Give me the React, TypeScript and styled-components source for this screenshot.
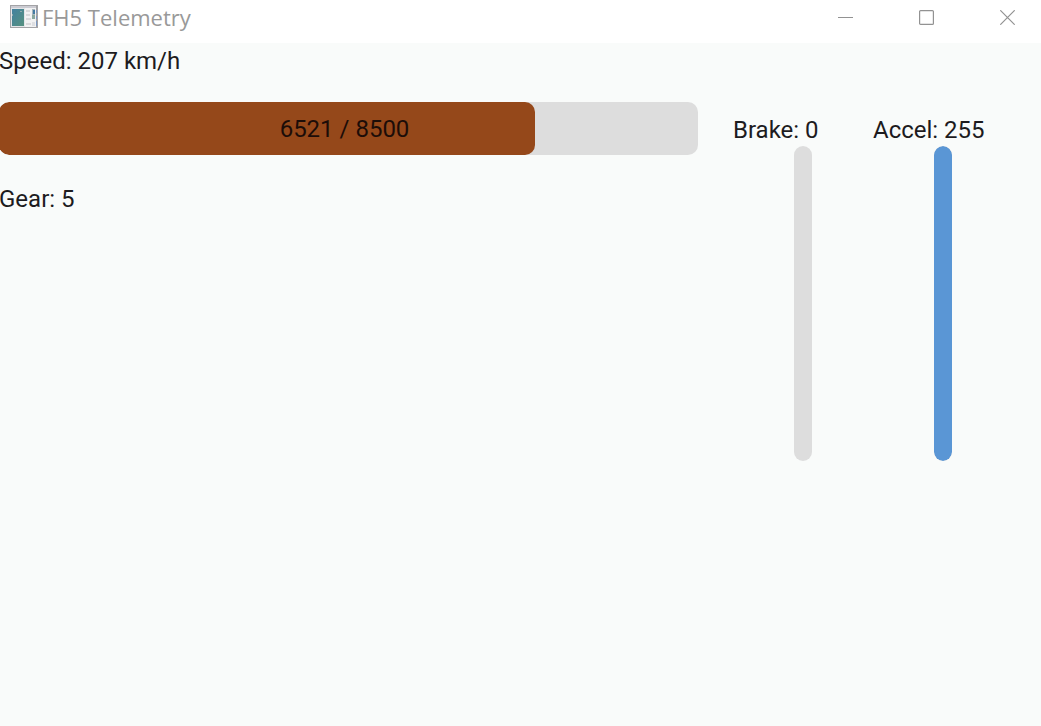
import React from "react";
import styled, { createGlobalStyle } from "styled-components";

const GlobalStyle = createGlobalStyle`
  *, *::before, *::after { box-sizing: border-box; }
  body {
    margin: 0;
    background: #f9fbfa;
    color: #1d1b1e;
    font-family: Roboto, "Liberation Sans", sans-serif;
    font-size: 24px;
    line-height: 32px;
  }
`;

const AppWindow = styled.div`
  display: flex;
  flex-direction: column;
  min-height: 100vh;
  overflow: hidden;
  background: #f9fbfa;
`;

const TitleBar = styled.header`
  display: flex;
  justify-content: space-between;
  height: 43px;
  padding-left: 10px;
  background: #ffffff;
`;

const TitleGroup = styled.div`
  display: flex;
  align-items: center;
  gap: 4px;
  height: 34px;
`;

const Title = styled.h1`
  margin: 0;
  color: #999999;
  font-family: "Open Sans", "Noto Sans", sans-serif;
  font-size: 22px;
  font-weight: 400;
  line-height: 32px;
  white-space: nowrap;
`;

const WindowControls = styled.div`
  display: flex;
  margin-right: -7px;
`;

const ControlButton = styled.button`
  display: flex;
  align-items: center;
  justify-content: center;
  width: 81px;
  height: 35px;
  padding: 0;
  border: 0;
  background: transparent;
  color: #929292;
`;

const Dashboard = styled.main`
  display: flex;
  gap: 35px;
  margin-left: -1px;
  padding-right: 28px;
`;

const Readings = styled.section`
  flex: 1;
  min-width: 0;
  padding-top: 2px;
`;

const Reading = styled.p`
  margin: 0;
  white-space: nowrap;
`;

const RevTrack = styled.div`
  position: relative;
  height: 53px;
  margin: 25px 0 28px;
  border-radius: 10px;
  overflow: hidden;
  background: #dddddd;
`;

const RevFill = styled.div`
  height: 100%;
  border-radius: 10px;
  background: #95481a;
`;

const RevLabel = styled.span`
  position: absolute;
  inset: 0;
  display: flex;
  align-items: center;
  justify-content: center;
  padding-right: 8px;
  color: #1c0d08;
`;

const Pedals = styled.section`
  display: flex;
  padding-top: 71px;
`;

const Pedal = styled.div`
  display: flex;
  flex-direction: column;
  width: 140px;
`;

const PedalTrack = styled.div`
  display: flex;
  flex-direction: column;
  justify-content: flex-end;
  align-self: center;
  width: 18px;
  height: 315px;
  border-radius: 9px;
  overflow: hidden;
  background: #dddddd;
`;

const PedalFill = styled.div`
  border-radius: 9px;
  background: #5a96d5;
`;

function AppIcon() {
  return (
    <svg width="28" height="24" viewBox="0 0 28 24" aria-hidden="true">
      <defs>
        <linearGradient id="screen" x1="0" y1="0" x2="1" y2="1">
          <stop offset="0" stopColor="#4381a0" />
          <stop offset="1" stopColor="#56917f" />
        </linearGradient>
      </defs>
      <path d="M0 0h28v23H0z" fill="#a3a3a6" />
      <path d="M1 1h25v21H1z" fill="#e4e5e8" />
      <path d="M1 1h25v2H1z" fill="#cbcbd2" />
      <path d="M15 3h11v19H15z" fill="#f2f2f3" />
      <path d="M2 4h12v17H2z" fill="url(#screen)" />
      <path d="M2 9h1v2H2zM10 6h2v1h-2z" fill="#8fa9ac" />
      <path d="M16 5h4v2h-4zM16 9h4v2h-4zM16 13h5v2h-5zM16 18h5v2h-5z" fill="#d9d9db" />
      <path d="M22 4h3v7h-3z" fill="#a6b5bc" />
      <path d="M23 5h2v4h-2z" fill="#447ba3" />
      <path d="M22 10h3v4h-3z" fill="#89a89f" />
      <path d="M26 5h1v3h-1zM26 11h1v3h-1zM26 16h1v5h-1z" fill="#7c99c3" />
      <path d="M22 17h3v4h-3z" fill="#dedfe2" />
    </svg>
  );
}

function MinimizeIcon() {
  return (
    <svg width="15" height="15" viewBox="0 0 15 15" aria-hidden="true">
      <path d="M0 7.5h15" stroke="currentColor" />
    </svg>
  );
}

function MaximizeIcon() {
  return (
    <svg width="15" height="15" viewBox="0 0 15 15" fill="none" aria-hidden="true">
      <rect x=".6" y=".6" width="13.8" height="13.8" rx="1" stroke="currentColor" strokeWidth="1.2" />
    </svg>
  );
}

function CloseIcon() {
  return (
    <svg width="15" height="15" viewBox="0 0 15 15" aria-hidden="true">
      <path d="M.3.3l14.4 14.4M14.7.3L.3 14.7" stroke="currentColor" strokeWidth="1.2" />
    </svg>
  );
}

interface PedalGaugeProps {
  name: string;
  value: number;
}

function PedalGauge({ name, value }: PedalGaugeProps) {
  return (
    <Pedal>
      <Reading>{name}: {value}</Reading>
      <PedalTrack role="progressbar" aria-label={name} aria-valuemin={0} aria-valuemax={255} aria-valuenow={value}>
        <PedalFill style={{ height: `${(value / 255) * 100}%` }} />
      </PedalTrack>
    </Pedal>
  );
}

export default function App() {
  const rpm = 6521;
  const maxRpm = 8500;

  return (
    <>
      <GlobalStyle />
      <AppWindow>
        <TitleBar>
          <TitleGroup>
            <AppIcon />
            <Title>FH5 Telemetry</Title>
          </TitleGroup>
          <WindowControls>
            <ControlButton type="button" aria-label="Minimize"><MinimizeIcon /></ControlButton>
            <ControlButton type="button" aria-label="Maximize"><MaximizeIcon /></ControlButton>
            <ControlButton type="button" aria-label="Close"><CloseIcon /></ControlButton>
          </WindowControls>
        </TitleBar>
        <Dashboard>
          <Readings>
            <Reading>Speed: 207 km/h</Reading>
            <RevTrack role="progressbar" aria-label="Engine speed" aria-valuemin={0} aria-valuemax={maxRpm} aria-valuenow={rpm}>
              <RevFill style={{ width: `${(rpm / maxRpm) * 100}%` }} />
              <RevLabel>{rpm} / {maxRpm}</RevLabel>
            </RevTrack>
            <Reading>Gear: 5</Reading>
          </Readings>
          <Pedals>
            <PedalGauge name="Brake" value={0} />
            <PedalGauge name="Accel" value={255} />
          </Pedals>
        </Dashboard>
      </AppWindow>
    </>
  );
}
